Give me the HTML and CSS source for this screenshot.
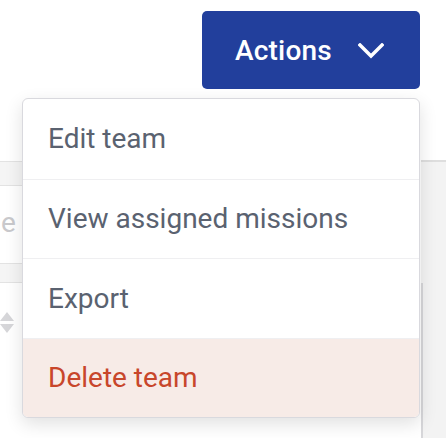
FILE: index.html
```html
<!DOCTYPE html>
<html>
<head>
<meta charset="utf-8">
<link rel="stylesheet" href="styles.css">
</head>
<body>
<div class="page">
  <div class="toolbar">
    <button class="actions-btn">
      <span>Actions</span>
      <svg class="chev" width="26" height="16" viewBox="0 0 26 16"><path d="M2 2 L13 13 L24 2" fill="none" stroke="#fff" stroke-width="3.4" stroke-linecap="square"/></svg>
    </button>
  </div>
  <div class="content">
    <div class="table">
      <div class="thead"></div>
      <div class="trow"><span class="cell-text">e</span></div>
      <div class="thead thead2"></div>
      <div class="sort">
        <span class="tri up"></span>
        <span class="tri down"></span>
      </div>
    </div>
    <div class="side">
      <div class="side-top"></div>
      <div class="side-body"></div>
    </div>
  </div>
  <div class="menu">
    <div class="item">Edit team</div>
    <div class="item">View assigned missions</div>
    <div class="item">Export</div>
    <div class="item danger">Delete team</div>
  </div>
</div>
</body>
</html>
```

FILE: styles.css
```css
* { box-sizing: border-box; }
html, body { margin: 0; padding: 0; background: #fff; }
body { font-family: Roboto, "Noto Sans", sans-serif; width: 446px; height: 438px; overflow: hidden; }
.page { position: relative; width: 446px; height: 438px; }

.toolbar { display: flex; justify-content: flex-end; padding: 11px 26px 0 0; height: 98px; }
.actions-btn {
  display: flex; align-items: center; gap: 26px;
  height: 78px; width: 218px; padding: 0 0 0 33px;
  background: #223f9c; color: #fff; border: none; border-radius: 5px;
  font-family: Roboto, sans-serif; font-size: 28px; font-weight: 500; letter-spacing: 0.2px;
}
.chev { display: block; margin-top: 1px; }

.content { display: flex; justify-content: space-between; }
.table { width: 22px; padding-top: 63px; overflow: hidden; }
.thead { height: 25px; background: #f5f5f5; border-top: 1px solid #e3e3e3; border-bottom: 1px solid #e3e3e3; }
.trow { height: 77px; position: relative; overflow: hidden; }
.cell-text { position: absolute; left: 1px; top: 20px; font-size: 28px; color: #c9c9cc; }
.thead2 { height: 20px; }
.sort { display: flex; flex-direction: column; gap: 3px; padding: 29px 0 0 0; width: 14px; }
.tri { display: block; width: 0; height: 0; border-left: 7px solid transparent; border-right: 7px solid transparent; }
.tri.up { border-bottom: 9px solid #d6d6d9; }
.tri.down { border-top: 9px solid #d6d6d9; }

.side { width: 25px; padding-top: 62px; }
.side-top { height: 123px; background: #f3f3f3; border-top: 2px solid #dedede; }
.side-body { height: 160px; background: #f3f3f3; border-left: 2px solid #d7d7da; }

.menu {
  position: absolute; left: 22px; top: 98px; width: 398px;
  background: #fff; border: 1px solid #d9d9de; border-radius: 6px;
  box-shadow: 0 6px 18px rgba(0,0,0,0.12);
  overflow: hidden;
}
.item {
  height: 79.5px; display: flex; align-items: center; padding: 0 0 0 25px;
  font-size: 28px; color: #5a6270; border-top: 1px solid #efeff1;
}
.item:first-child { border-top: none; }
.item.danger { background: #f7ebe7; color: #c8462b; }
```
